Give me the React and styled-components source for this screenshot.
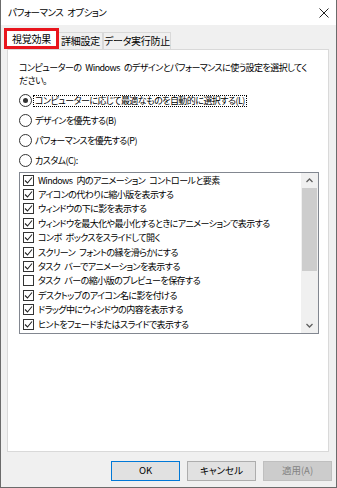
import React from "react";
import styled, { createGlobalStyle } from "styled-components";

const GlobalStyle = createGlobalStyle`
  html, body { margin: 0; padding: 0; background: #fff; }
  body {
    font-family: "Noto Sans CJK JP", "Noto Sans", sans-serif;
    font-feature-settings: "palt";
    font-size: 9px;
    letter-spacing: -0.55px;
    word-spacing: 2.5px;
    color: #000;
  }
`;

const Window = styled.div`
  width: 337px;
  height: 488px;
  box-sizing: border-box;
  border: 1px solid #6b6b6b;
  border-top: 0;
  display: flex;
  flex-direction: column;
  background: #f0f0f0;
`;

const TitleBar = styled.div`
  height: 25px;
  background: #fff;
  display: flex;
  align-items: center;
  justify-content: space-between;
  padding: 0 7px 0 7px;
  flex-shrink: 0;
`;

const Title = styled.span`
  font-size: 9.5px;
  line-height: 1;
`;

const CloseBtn = styled.span`
  display: flex;
  width: 10px;
  height: 10px;
  margin-top: 1px;
`;

const Body = styled.div`
  flex: 1;
  display: flex;
  flex-direction: column;
  padding: 3px 7px 0 6px;
  min-height: 0;
`;

const TabRow = styled.div`
  display: flex;
  align-items: flex-end;
  height: 21px;
  position: relative;
  z-index: 1;
  margin-left: -3px;
`;

const Tab = styled.div`
  box-sizing: border-box;
  height: ${p => (p.$active ? "21px" : "17px")};
  width: ${p => p.$w}px;
  justify-content: center;
  border: ${p => (p.$active ? "3px solid #e8141c" : "1px solid #d9d9d9")};
  border-bottom: ${p => (p.$active ? "3px solid #e8141c" : "0")};
  border-left: ${p => (p.$active ? "3px solid #e8141c" : p.$first ? "0" : "1px solid #d9d9d9")};
  background: ${p => (p.$active ? "#fff" : "#f0f0f0")};
  display: flex;
  align-items: center;
  line-height: 1;
  font-size: 10px;
  letter-spacing: -0.3px;
  white-space: nowrap;
`;

const Panel = styled.div`
  height: 403px;
  box-sizing: border-box;
  background: #fff;
  border: 1px solid #d9d9d9;
  padding: 11px 10px 0 11px;
  flex-shrink: 0;
`;

const Description = styled.p`
  margin: 0 0 7px 0;
  line-height: 13px;
  padding-right: 6px;
`;

const RadioGroup = styled.div`
  display: flex;
  flex-direction: column;
  gap: 7px;
  margin-bottom: 5px;
`;

const RadioRow = styled.label`
  display: flex;
  align-items: center;
  height: 13px;
  gap: 1px;
  white-space: nowrap;
`;

const RadioCircle = styled.span`
  width: 11px;
  height: 11px;
  border-radius: 50%;
  border: 1px solid #333;
  background: #fff;
  display: flex;
  align-items: center;
  justify-content: center;
  flex-shrink: 0;
  &::after {
    content: "";
    width: 5px;
    height: 5px;
    border-radius: 50%;
    background: ${p => (p.$on ? "#333" : "transparent")};
  }
`;

const RadioLabel = styled.span`
  line-height: 10px;
  padding: 0 1px 0 1px;
  border: 1px dotted ${p => (p.$focus ? "#000" : "transparent")};
`;

const ListBox = styled.div`
  height: 162px;
  box-sizing: border-box;
  border: 1px solid #828790;
  display: flex;
  margin-right: -1px;
`;

const ListItems = styled.div`
  flex: 1;
`;

const ListItem = styled.div`
  height: 14.4px;
  display: flex;
  align-items: center;
  gap: 4px;
  padding-left: 3px;
  white-space: nowrap;
`;

const CheckBox = styled.span`
  width: 11px;
  height: 11px;
  box-sizing: border-box;
  border: 1px solid #333;
  background: #fff;
  display: flex;
  align-items: center;
  justify-content: center;
  flex-shrink: 0;
`;

const ScrollBar = styled.div`
  width: 15px;
  background: #f0f0f0;
  display: flex;
  flex-direction: column;
  align-items: center;
  padding: 0 1px;
`;

const ScrollArrow = styled.div`
  height: 15px;
  width: 100%;
  display: flex;
  align-items: center;
  justify-content: center;
`;

const ScrollTrack = styled.div`
  flex: 1;
  width: 100%;
`;

const ScrollThumb = styled.div`
  height: 83px;
  background: #cdcdcd;
`;

const Footer = styled.div`
  flex: 1;
  display: flex;
  justify-content: flex-end;
  align-items: flex-start;
  gap: 7px;
  padding-top: 9px;
  margin-right: -3px;
`;

const Button = styled.button`
  width: 69px;
  height: 20px;
  box-sizing: border-box;
  font: inherit;
  font-size: 9.5px;
  line-height: 1;
  padding: 0;
  background: ${p => (p.$disabled ? "#cccccc" : "#e1e1e1")};
  color: ${p => (p.$disabled ? "#838383" : "#000")};
  border: 1px solid ${p => (p.$default ? "#0078d7" : p.$disabled ? "#bfbfbf" : "#adadad")};
`;

const Check = () => (
  <svg width="9" height="9" viewBox="0 0 9 9">
    <path d="M1 4.5 L3.5 7 L8 1.5" fill="none" stroke="#222" strokeWidth="1.1" />
  </svg>
);

const Chevron = ({ up }) => (
  <svg width="7" height="5" viewBox="0 0 7 5">
    <path d={up ? "M0.5 4 L3.5 1 L6.5 4" : "M0.5 1 L3.5 4 L6.5 1"} fill="none" stroke="#606060" strokeWidth="1.3" />
  </svg>
);

const options = [
  { text: "Windows 内のアニメーション コントロールと要素", on: true },
  { text: "アイコンの代わりに縮小版を表示する", on: true },
  { text: "ウィンドウの下に影を表示する", on: true },
  { text: "ウィンドウを最大化や最小化するときにアニメーションで表示する", on: true },
  { text: "コンボ ボックスをスライドして開く", on: true },
  { text: "スクリーン フォントの縁を滑らかにする", on: true },
  { text: "タスク バーでアニメーションを表示する", on: true },
  { text: "タスク バーの縮小版のプレビューを保存する", on: false },
  { text: "デスクトップのアイコン名に影を付ける", on: true },
  { text: "ドラッグ中にウィンドウの内容を表示する", on: true },
  { text: "ヒントをフェードまたはスライドで表示する", on: true },
];

const radios = [
  { text: "コンピューターに応じて最適なものを自動的に選択する(L)", on: true },
  { text: "デザインを優先する(B)" },
  { text: "パフォーマンスを優先する(P)" },
  { text: "カスタム(C):" },
];

export default function App() {
  return (
    <>
      <GlobalStyle />
      <Window>
        <TitleBar>
          <Title>パフォーマンス オプション</Title>
          <CloseBtn>
            <svg width="10" height="10" viewBox="0 0 10 10">
              <path d="M0.5 0.5 L9.5 9.5 M9.5 0.5 L0.5 9.5" stroke="#222" strokeWidth="1" />
            </svg>
          </CloseBtn>
        </TitleBar>
        <Body>
          <TabRow>
            <Tab $active $w={55}>視覚効果</Tab>
            <Tab $first $w={44}>詳細設定</Tab>
            <Tab $w={68}>データ実行防止</Tab>
          </TabRow>
          <Panel>
            <Description>
              コンピューターの Windows のデザインとパフォーマンスに使う設定を選択してください。
            </Description>
            <RadioGroup>
              {radios.map((r, i) => (
                <RadioRow key={i}>
                  <RadioCircle $on={r.on} />
                  <RadioLabel $focus={r.on}>{r.text}</RadioLabel>
                </RadioRow>
              ))}
            </RadioGroup>
            <ListBox>
              <ListItems>
                {options.map((o, i) => (
                  <ListItem key={i}>
                    <CheckBox>{o.on && <Check />}</CheckBox>
                    <span>{o.text}</span>
                  </ListItem>
                ))}
              </ListItems>
              <ScrollBar>
                <ScrollArrow><Chevron up /></ScrollArrow>
                <ScrollTrack>
                  <ScrollThumb />
                </ScrollTrack>
                <ScrollArrow><Chevron /></ScrollArrow>
              </ScrollBar>
            </ListBox>
          </Panel>
          <Footer>
            <Button $default>OK</Button>
            <Button>キャンセル</Button>
            <Button $disabled>適用(A)</Button>
          </Footer>
        </Body>
      </Window>
    </>
  );
}
